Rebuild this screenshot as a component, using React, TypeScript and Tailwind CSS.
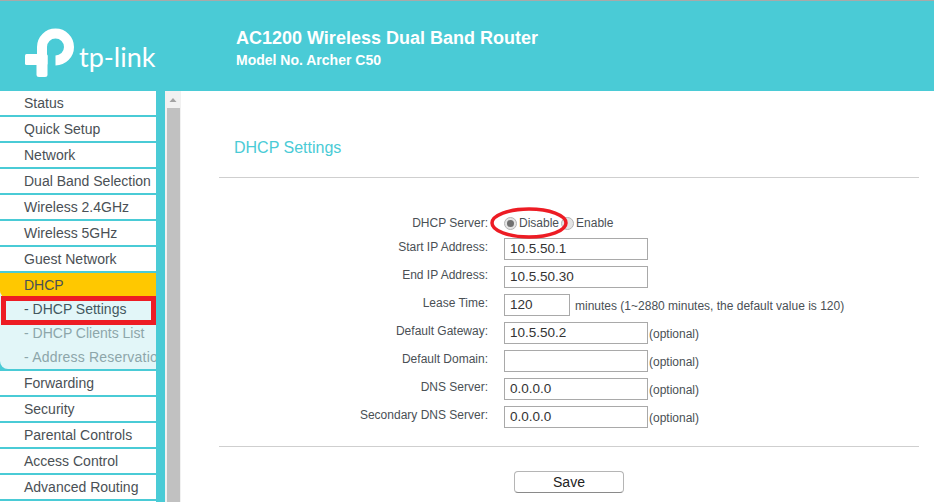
import React from 'react';

const menuTop = ['Status', 'Quick Setup', 'Network', 'Dual Band Selection', 'Wireless 2.4GHz', 'Wireless 5GHz', 'Guest Network'];
const menuBottom = ['Forwarding', 'Security', 'Parental Controls', 'Access Control', 'Advanced Routing', ''];

const fields = [
    { label: 'Start IP Address:', value: '10.5.50.1', wide: true },
    { label: 'End IP Address:', value: '10.5.50.30', wide: true },
    { label: 'Lease Time:', value: '120', note: 'minutes (1~2880 minutes, the default value is 120)' },
    { label: 'Default Gateway:', value: '10.5.50.2', wide: true, note: '(optional)' },
    { label: 'Default Domain:', value: '', wide: true, note: '(optional)' },
    { label: 'DNS Server:', value: '0.0.0.0', wide: true, note: '(optional)' },
    { label: 'Secondary DNS Server:', value: '0.0.0.0', wide: true, note: '(optional)' },
];

function MenuRow({ name }: { name: string }) {
    return (
        <div className="h-[26px] shrink-0 bg-white border-b-2 border-[#4acbd6] pl-6 flex items-center text-[14px] text-[#4a5055] whitespace-nowrap overflow-hidden">
            {name}
        </div>
    );
}

function Radio({ checked }: { checked?: boolean }) {
    return (
        <span className="w-[13px] h-[13px] rounded-full border border-[#b5b5b5] bg-[#e4e4e4] flex items-center justify-center shrink-0">
            {checked && <span className="w-[7px] h-[7px] rounded-full bg-[#707070]" />}
        </span>
    );
}

function Logo() {
    return (
        <div className="flex items-end">
            <svg width="50" height="50" viewBox="25 28 50 50" className="shrink-0">
                <path d="M42 60V47a13.5 13.5 0 1 1 13.5 13.5" fill="none" stroke="#fff" strokeWidth="10" />
                <rect x="25" y="54" width="22.5" height="11" rx="1.5" fill="#fff" />
                <rect x="36.5" y="54" width="11" height="23" rx="2.5" fill="#fff" />
            </svg>
            <span className="ml-[4px] mb-[5px] text-[27px] leading-[32px] font-normal text-white font-['Lato',sans-serif]">tp-link</span>
        </div>
    );
}

export default function App() {
    return (
        <div className="relative w-[934px] h-[502px] overflow-hidden bg-white font-['Liberation_Sans',Arial,sans-serif] flex flex-col">
            <div className="h-px shrink-0 bg-[#a9a9a9]" />
            <header className="h-[90px] shrink-0 bg-[#4acbd6] flex">
                <div className="w-[236px] shrink-0 pl-[25px] pt-[27px]">
                    <Logo />
                </div>
                <div className="pt-[27px] text-white font-bold">
                    <div className="text-[18px] leading-[21px]">AC1200 Wireless Dual Band Router</div>
                    <div className="text-[14px] leading-[16px] mt-[3px]">Model No. Archer C50</div>
                </div>
            </header>

            <div className="flex flex-1 min-h-0">
                <aside className="w-[165px] shrink-0 bg-[#4acbd6] pr-[9px] flex flex-col overflow-hidden">
                    {menuTop.map((m) => <MenuRow key={m} name={m} />)}
                    <div className="shrink-0 bg-[#e2f6f8]">
                        <div className="h-[24px] bg-[#ffc800] rounded-bl-[6px] pl-6 flex items-center text-[14px] text-[#4a5055]">DHCP</div>
                    </div>
                    <div className="h-[72px] shrink-0 bg-[#e2f6f8] rounded-bl-[8px] text-[14px] pl-6 flex flex-col">
                        <div className="h-[24px] flex items-center text-[#43585f]">- DHCP Settings</div>
                        <div className="h-[24px] flex items-center text-[#8da6aa]">- DHCP Clients List</div>
                        <div className="h-[24px] flex items-center text-[#8da6aa] tracking-[0.2px] whitespace-nowrap overflow-hidden">- Address Reservation</div>
                    </div>
                    <div className="h-[2px] shrink-0 bg-[#4acbd6]" />
                    {menuBottom.map((m, i) => <MenuRow key={i} name={m} />)}
                </aside>

                <div className="w-[16px] shrink-0 bg-[#f1f1f1] flex flex-col items-center">
                    <svg width="16" height="17" viewBox="0 0 16 17" className="shrink-0">
                        <path d="M4.5 11L8 7l3.5 4z" fill="#a3a3a3" />
                    </svg>
                    <div className="w-[13px] flex-1 bg-[#c1c1c1]" />
                </div>

                <main className="flex-1 pl-[38px] pr-[15px]">
                    <h1 className="pt-[47px] pl-[15px] text-[16px] leading-[20px] text-[#4acbd6]">DHCP Settings</h1>
                    <div className="mt-[19px] h-px bg-[#cfcfcf]" />

                    <div className="mt-[34px] flex items-center h-[22px] text-[12px] text-[#4a5055]">
                        <span className="w-[269px] text-right shrink-0">DHCP Server:</span>
                        <span className="ml-[16px] flex items-center gap-[2px]"><Radio checked />Disable</span>
                        <span className="ml-[2px] flex items-center gap-[2px]"><Radio />Enable</span>
                    </div>

                    <div className="mt-[4px] flex flex-col gap-[6px]">
                        {fields.map((f) => (
                            <div key={f.label} className="flex h-[22px] text-[12px] text-[#4a5055]">
                                <span className="w-[269px] text-right shrink-0 leading-[19px]">{f.label}</span>
                                <span className={`ml-[16px] shrink-0 h-[22px] border border-[#a9a9a9] pl-[5px] flex items-center text-[13.5px] text-[#333333] ${f.wide ? 'w-[144px]' : 'w-[66px]'}`}>
                                    {f.value}
                                </span>
                                {f.note && <span className={`leading-[24px] whitespace-nowrap ${f.wide ? 'ml-px' : 'ml-[5px]'}`}>{f.note}</span>}
                            </div>
                        ))}
                    </div>

                    <div className="mt-[18px] h-px bg-[#cfcfcf]" />
                    <div className="mt-[24px] flex justify-center">
                        <button className="w-[110px] h-[22px] rounded-[4px] border border-[#b5b5b5] border-b-[#8a8a8a] bg-white text-[14px] leading-none text-[#222222]">Save</button>
                    </div>
                </main>
            </div>

            {/* red markup on top of the screenshot */}
            <div className="absolute left-[1px] top-[296px] w-[155px] h-[29px] border-[5px] border-[#ed1c24]" />
            <svg className="absolute left-[488px] top-[205px]" width="84" height="36" viewBox="0 0 84 36">
                <ellipse cx="41" cy="18" rx="37" ry="14" fill="none" stroke="#ed1c24" strokeWidth="3.5" />
            </svg>
        </div>
    );
}
